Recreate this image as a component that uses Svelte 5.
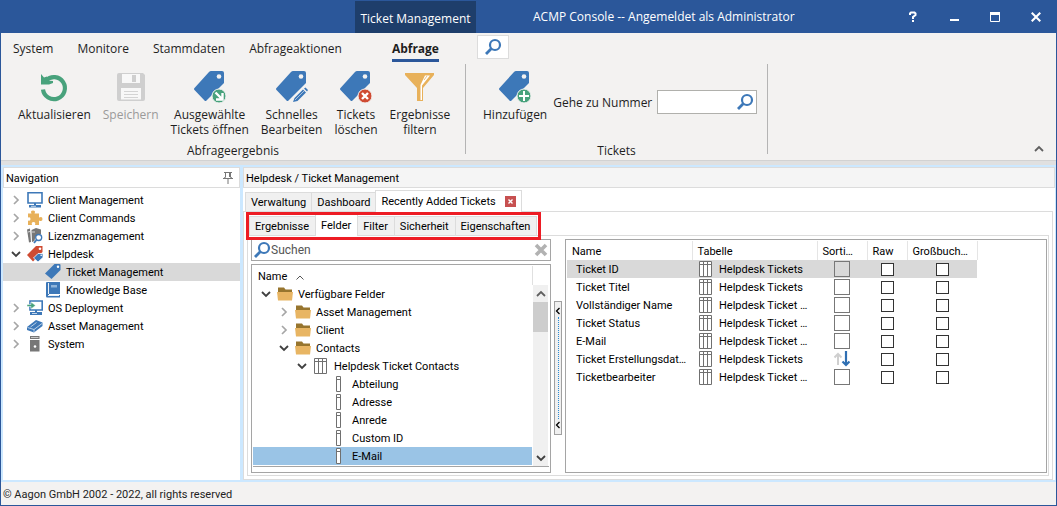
<script>
  const menus = ['System', 'Monitore', 'Stammdaten', 'Abfrageaktionen', 'Abfrage'];
  const resultActions = [
    { icon: 'refresh', lines: ['Aktualisieren'] },
    { icon: 'save', lines: ['Speichern'], disabled: true },
    { icon: 'tag-open', lines: ['Ausgewählte', 'Tickets öffnen'] },
    { icon: 'tag-edit', lines: ['Schnelles', 'Bearbeiten'] },
    { icon: 'tag-delete', lines: ['Tickets', 'löschen'] },
    { icon: 'funnel', lines: ['Ergebnisse', 'filtern'] }
  ];
  const nav = [
    { label: 'Client Management', icon: 'monitor', level: 0, state: 'closed' },
    { label: 'Client Commands', icon: 'puzzle', level: 0, state: 'closed' },
    { label: 'Lizenzmanagement', icon: 'license', level: 0, state: 'closed' },
    { label: 'Helpdesk', icon: 'helpdesk', level: 0, state: 'open' },
    { label: 'Ticket Management', icon: 'tag', level: 1, selected: true },
    { label: 'Knowledge Base', icon: 'book', level: 1 },
    { label: 'OS Deployment', icon: 'deploy', level: 0, state: 'closed' },
    { label: 'Asset Management', icon: 'asset', level: 0, state: 'closed' },
    { label: 'System', icon: 'server', level: 0, state: 'closed' }
  ];
  const fields = [
    { label: 'Verfügbare Felder', icon: 'folder', level: 0, state: 'open' },
    { label: 'Asset Management', icon: 'folder', level: 1, state: 'closed' },
    { label: 'Client', icon: 'folder', level: 1, state: 'closed' },
    { label: 'Contacts', icon: 'folder', level: 1, state: 'open' },
    { label: 'Helpdesk Ticket Contacts', icon: 'table', level: 2, state: 'open' },
    { label: 'Abteilung', icon: 'column', level: 3 },
    { label: 'Adresse', icon: 'column', level: 3 },
    { label: 'Anrede', icon: 'column', level: 3 },
    { label: 'Custom ID', icon: 'column', level: 3 },
    { label: 'E-Mail', icon: 'column', level: 3, selected: true }
  ];
  const subTabs = ['Ergebnisse', 'Felder', 'Filter', 'Sicherheit', 'Eigenschaften'];
  const rows = [
    { name: 'Ticket ID', table: 'Helpdesk Tickets', selected: true },
    { name: 'Ticket Titel', table: 'Helpdesk Tickets' },
    { name: 'Vollständiger Name', table: 'Helpdesk Ticket …' },
    { name: 'Ticket Status', table: 'Helpdesk Ticket …' },
    { name: 'E-Mail', table: 'Helpdesk Ticket …' },
    { name: 'Ticket Erstellungsdat…', table: 'Helpdesk Tickets', sorted: true },
    { name: 'Ticketbearbeiter', table: 'Helpdesk Ticket …' }
  ];
</script>

{#snippet bigTag()}
  <path fill="#3d78b8" d="M17 0H28Q30 0 30 2V12L12.500 29.500Q11.500 30.500 10.500 29.500L.5 19Q-.5 18 .5 17L15 1Q16 0 17 0Z" />
  <circle cx="25" cy="5.500" r="2.300" fill="#f3f2f1" />
{/snippet}

{#snippet icon(name)}
  {#if name === 'refresh'}
    <svg width="32" height="32" viewBox="0 0 32 32" aria-hidden="true">
      <path d="M8 9.500A11 11 0 1 1 5 18.500" fill="none" stroke="#48a27c" stroke-width="4.200" />
      <path d="M3 3L6 6.500L9 5.500L9 9.500L15 10V12L11 13.500H3Z" fill="#48a27c" />
    </svg>
  {:else if name === 'save'}
    <svg width="32" height="32" viewBox="0 0 32 32" aria-hidden="true">
      <path d="M4 2H28L30 4V28Q30 30 28 30H4Q2 30 2 28V4Q2 2 4 2Z" fill="#cfcfcf" />
      <path d="M7 3H25V12H7ZM6 17H26V28.500H6Z" fill="#f8f8f8" />
      <path d="M17 4H21V11H17Z" fill="#cfcfcf" />
      <path d="M9 20.500H23M9 23.500H23M9 26.500H23" stroke="#d4d4d4" />
    </svg>
  {:else if name === 'tag-open'}
    <svg width="32" height="32" viewBox="0 0 32 32" aria-hidden="true">
      {@render bigTag()}
      <circle cx="25" cy="25" r="7" fill="#48a27c" stroke="#f3f2f1" />
      <path d="M21.500 21.500L27.500 27.500M28.500 22V28.500H22" fill="none" stroke="#fff" stroke-width="2.400" />
    </svg>
  {:else if name === 'tag-edit'}
    <svg width="32" height="32" viewBox="0 0 32 32" aria-hidden="true">
      {@render bigTag()}
      <path d="M15 32L18 25L28 15H32V19L21 31Z" fill="#f3f2f1" />
      <path d="M17 31L18.500 27L27 18.500L30 21.500L21.500 30ZM28 17.500L29.500 16.500L32 19L31 20.500Z" fill="#3d78b8" />
      <path d="M19 29L28 20" stroke="#f3f2f1" stroke-width=".6" />
    </svg>
  {:else if name === 'tag-delete'}
    <svg width="32" height="32" viewBox="0 0 32 32" aria-hidden="true">
      {@render bigTag()}
      <circle cx="25" cy="25" r="7" fill="#cf4b32" stroke="#f3f2f1" />
      <path d="M22 22L28 28M28 22L22 28" stroke="#fff" stroke-width="2.400" />
    </svg>
  {:else if name === 'tag-add'}
    <svg width="32" height="32" viewBox="0 0 32 32" aria-hidden="true">
      {@render bigTag()}
      <circle cx="25" cy="25" r="7" fill="#48a27c" stroke="#f3f2f1" />
      <path d="M25 20V30M20 25H30" stroke="#fff" stroke-width="2" />
    </svg>
  {:else if name === 'funnel'}
    <svg width="32" height="32" viewBox="0 0 32 32" aria-hidden="true">
      <path d="M1 2H30V4L19 17V30H13V17L1 4Z" fill="#e8b15a" />
      <path d="M21 4.500H26L18 14.500V29H16.500V14Z" fill="#fff" />
      <path d="M20 9L23 5" stroke="#e8b15a" stroke-width=".8" />
    </svg>
  {:else if name === 'search'}
    <svg width="18" height="18" viewBox="0 0 18 18" aria-hidden="true">
      <circle cx="11" cy="7" r="5" fill="none" stroke="#3d78b8" stroke-width="2.200" />
      <path d="M7.200 10.800L2 16" stroke="#3d78b8" stroke-width="2.800" />
    </svg>
  {:else if name === 'monitor'}
    <svg width="16" height="16" viewBox="0 0 16 16" aria-hidden="true">
      <path d="M1 .8H15V11H1Z" fill="#fff" stroke="#3d78b8" stroke-width="1.600" />
      <path d="M7 11H9V13H14V15.500H2V13H7Z" fill="#3d78b8" />
      <path d="M4 14.300H9" stroke="#fff" stroke-width=".7" />
    </svg>
  {:else if name === 'puzzle'}
    <svg width="16" height="16" viewBox="0 0 16 16" aria-hidden="true">
      <path d="M1 3.500H4.500Q3 .5 6 .5T7.500 3.500H12V7.500Q15.500 6 15.500 9T12 10.500V15H8Q9 12 6.500 12T5 15H1V10.500Q3.500 11.500 3.500 9T1 7.500Z" fill="#e8b15a" />
    </svg>
  {:else if name === 'license'}
    <svg width="16" height="16" viewBox="0 0 16 16" aria-hidden="true">
      <path d="M0 1.500L3 .5L4 14L2 14.500ZM4.500 2L9 0L14 1.500V6Q8 6 7.500 13L5 14Z" fill="#777" />
      <path d="M1 4L3 3.500M5 4H8" stroke="#fff" stroke-width=".7" />
      <circle cx="11.700" cy="9.500" r="3" fill="#fff" stroke="#3d78b8" stroke-width="1.300" />
      <path d="M9.500 12L7 15" stroke="#3d78b8" stroke-width="1.800" />
    </svg>
  {:else if name === 'helpdesk'}
    <svg width="16" height="16" viewBox="0 0 16 16" aria-hidden="true">
      <path d="M9 0H15.500V6L6 15.500L0 9Z" fill="#cf4b32" />
      <circle cx="13" cy="2.700" r="1.300" fill="#fff" />
      <path d="M11 7.500H16V11.500L11 16L6.500 12Z" fill="#3d78b8" stroke="#fff" stroke-width=".8" />
      <circle cx="14.200" cy="9.200" r=".8" fill="#fff" />
    </svg>
  {:else if name === 'tag'}
    <svg width="16" height="16" viewBox="0 0 16 16" aria-hidden="true">
      <path d="M9.500 0H14.500Q15.500 0 15.500 1V6L6.500 15L0 9.500Z" fill="#3d78b8" />
      <circle cx="13" cy="2.800" r="1.200" fill="#fff" />
    </svg>
  {:else if name === 'book'}
    <svg width="16" height="16" viewBox="0 0 16 16" aria-hidden="true">
      <path d="M2 0H15V12H4V13H15V15.500H2Q1 15.500 1 14V1Q1 0 2 0Z" fill="#3d78b8" />
      <path d="M3.500 1V12M3 13.500H14" stroke="#fff" stroke-width=".9" />
      <path d="M6 3H12V5.500H6Z" fill="#8fb4da" />
    </svg>
  {:else if name === 'deploy'}
    <svg width="16" height="16" viewBox="0 0 16 16" aria-hidden="true">
      <path d="M3 1H15.200V10H3Z" fill="#fff" stroke="#3d78b8" stroke-width="1.600" />
      <path d="M8 10H10V12H15V15H3V12H8Z" fill="#3d78b8" />
      <path d="M5 13.500H10" stroke="#fff" stroke-width=".7" />
      <path d="M0 4.500H4V2L8.500 5.500L4 9V6.500H0Z" fill="#48a27c" stroke="#fff" stroke-width=".5" />
    </svg>
  {:else if name === 'asset'}
    <svg width="16" height="16" viewBox="0 0 16 16" aria-hidden="true">
      <path d="M0 9L9 2L15.500 4.500V8L7 14.500L0 12Z" fill="#3d78b8" />
      <path d="M.5 9.500L7 11.500L15 5.500M7 11.500V14M3.500 9L9.500 4.500" fill="none" stroke="#dce9f5" stroke-width=".8" />
    </svg>
  {:else if name === 'server'}
    <svg width="16" height="16" viewBox="0 0 16 16" aria-hidden="true">
      <path d="M3 0H12.500V3H3ZM3 4H12.500V15.500H3Z" fill="#777" />
      <path d="M4 1.500H11.500" stroke="#fff" stroke-width=".6" />
      <circle cx="8" cy="10.500" r="1.300" fill="#fff" />
    </svg>
  {:else if name === 'folder'}
    <svg width="16" height="16" viewBox="0 0 16 16" aria-hidden="true">
      <path d="M1 1.500H7L8.500 3.500H15V6H1Z" fill="#97752e" />
      <path d="M0 6H16L15 14.500H1Z" fill="#e8b563" />
    </svg>
  {:else if name === 'table'}
    <svg width="16" height="16" viewBox="0 0 16 16" aria-hidden="true">
      <path d="M1.500 .5H13.500V15.500H1.500ZM1.500 3.500H13.500M5.500 .5V15.500M9.500 .5V15.500" fill="#fff" stroke="#707070" />
    </svg>
  {:else if name === 'column'}
    <svg width="16" height="16" viewBox="0 0 16 16" aria-hidden="true">
      <path d="M5.500 .5H9.500V15.500H5.500ZM5.500 3.500H9.500" fill="#fff" stroke="#707070" />
    </svg>
  {:else if name === 'sort'}
    <svg width="16" height="16" viewBox="0 0 16 16" aria-hidden="true">
      <path d="M4 14V3M.5 6.500L4 3L7.500 6.500" fill="none" stroke="#cfcfcf" stroke-width="2" />
      <path d="M12 0V14M8.500 10.500L12 14L15.500 10.500" fill="none" stroke="#2f6fb3" stroke-width="2.200" />
    </svg>
  {:else if name === 'closed'}
    <svg width="10" height="10" viewBox="0 0 10 10" aria-hidden="true"><path d="M3 1L7 5L3 9" fill="none" stroke="#a6a6a6" stroke-width="1.700" /></svg>
  {:else if name === 'open'}
    <svg width="10" height="10" viewBox="0 0 10 10" aria-hidden="true"><path d="M1 3L5 7L9 3" fill="none" stroke="#404040" stroke-width="1.800" /></svg>
  {:else if name === 'up'}
    <svg width="10" height="10" viewBox="0 0 10 10" aria-hidden="true"><path d="M1 7L5 3L9 7" fill="none" stroke="#606060" stroke-width="1.800" /></svg>
  {:else if name === 'left'}
    <svg width="6" height="8" viewBox="0 0 6 8" aria-hidden="true"><path d="M4.500 1L1.500 4L4.500 7" fill="none" stroke="#000" stroke-width="1.300" /></svg>
  {/if}
{/snippet}

{#snippet tree(items, label)}
  <ul class="tree" aria-label={label}>
    {#each items as item}
      <li>
        <button class="node level{item.level}" class:selected={item.selected}>
          <span class="toggle">{#if item.state}{@render icon(item.state)}{/if}</span>
          {@render icon(item.icon)}
          <span>{item.label}</span>
        </button>
      </li>
    {/each}
  </ul>
{/snippet}

{#snippet action(item)}
  <button class="action" disabled={item.disabled}>
    {@render icon(item.icon)}
    <span>{#each item.lines as line, i}{#if i}<br />{/if}{line}{/each}</span>
  </button>
{/snippet}

<div class="window">
  <header class="titlebar">
    <div class="context">Ticket Management</div>
    <h1>ACMP Console -- Angemeldet als Administrator</h1>
    <div class="controls">
      <button aria-label="Hilfe"><svg width="10" height="12" viewBox="0 0 10 12"><path d="M2 4V2.500L3 1.500H6.500L7.500 2.500V4L5 6V8M4 10H6" fill="none" stroke="#fff" stroke-width="2" /></svg></button>
      <button aria-label="Minimieren"><svg width="10" height="12" viewBox="0 0 10 12"><path d="M1 9H10" stroke="#fff" stroke-width="2" /></svg></button>
      <button aria-label="Maximieren"><svg width="10" height="12" viewBox="0 0 10 12"><path d="M.5 1.500H9.500V10.500H.5Z" fill="none" stroke="#fff" /><path d="M0 1H10V4H0Z" fill="#fff" /></svg></button>
      <button aria-label="Schließen"><svg width="10" height="12" viewBox="0 0 10 12"><path d="M.7 1.700L9.300 10.300M9.300 1.700L.7 10.300" stroke="#fff" stroke-width="2.200" /></svg></button>
    </div>
  </header>

  <nav class="menus" aria-label="Menü">
    {#each menus as m}
      <button class:active={m === 'Abfrage'}>{m}</button>
    {/each}
    <button class="find" aria-label="Suche">{@render icon('search')}</button>
  </nav>

  <section class="ribbon" aria-label="Menüband">
    <div class="group results">
      <div class="actions">
        {#each resultActions as item}{@render action(item)}{/each}
      </div>
      <p>Abfrageergebnis</p>
    </div>
    <div class="group tickets">
      <div class="actions">
        {@render action({ icon: 'tag-add', lines: ['Hinzufügen'] })}
        <div class="goto">
          <label for="number">Gehe zu Nummer</label>
          <div class="number">
            <input id="number" type="text" />
            <button aria-label="Gehe zu">{@render icon('search')}</button>
          </div>
        </div>
      </div>
      <p>Tickets</p>
    </div>
    <button class="collapse" aria-label="Menüband reduzieren">{@render icon('up')}</button>
  </section>

  <main>
    <aside>
      <div class="panel-title">
        <h2>Navigation</h2>
        <button aria-label="Anheften">
          <svg width="10" height="12" viewBox="0 0 10 12"><path d="M1 .5H9M2.500 .5V5.500M7.500 .5V5.500M6.500 1V5M0 6.500H10M2.500 5L.5 6.500M7.500 5L9.500 6.500M5 7V12" fill="none" stroke="#777" /></svg>
        </button>
      </div>
      {@render tree(nav, 'Navigation')}
    </aside>

    <section class="content">
      <div class="panel-title crumbs"><h2>Helpdesk / Ticket Management</h2></div>
      <div class="tabs outer">
        <button>Verwaltung</button>
        <button>Dashboard</button>
        <div class="tab active">
          <button>Recently Added Tickets</button>
          <button class="close" aria-label="Tab schließen"><svg width="5" height="5" viewBox="0 0 5 5"><path d="M.5 .5L4.500 4.500M4.500 .5L.5 4.500" stroke="#fff" stroke-width="1.400" /></svg></button>
        </div>
      </div>
      <div class="page">
        <div class="subtabs">
          <div class="tabs inner">
            {#each subTabs as t}<button class:active={t === 'Felder'}>{t}</button>{/each}
          </div>
          <div class="marker"></div>
        </div>
        <div class="subpage">
          <div class="picker">
            <div class="search">
              {@render icon('search')}
              <input type="text" placeholder="Suchen" aria-label="Suchen" />
              <button aria-label="Leeren"><svg width="14" height="14" viewBox="0 0 14 14"><path d="M2 2L12 12M12 2L2 12" stroke="#b2b2b2" stroke-width="3.600" /></svg></button>
            </div>
            <div class="fields">
              <div class="fields-head"><button>Name <svg width="8" height="5" viewBox="0 0 8 5"><path d="M.5 4.500L4 1L7.500 4.500" fill="none" stroke="#555" /></svg></button></div>
              <div class="fields-body">
                {@render tree(fields, 'Felder')}
                <div class="scrollbar">
                  <button aria-label="Nach oben">{@render icon('up')}</button>
                  <span class="thumb"></span>
                  <button class="down" aria-label="Nach unten">{@render icon('open')}</button>
                </div>
              </div>
            </div>
          </div>
          <div class="grip">
            <button aria-label="Links einklappen">{@render icon('left')}</button>
            <span></span>
            <button aria-label="Links ausklappen">{@render icon('left')}</button>
          </div>
          <div class="grid">
            <table>
              <colgroup><col class="c-name" /><col class="c-name" /><col class="c-sort" /><col class="c-raw" /><col class="c-upper" /></colgroup>
              <thead>
                <tr><th>Name</th><th>Tabelle</th><th>Sorti…</th><th>Raw</th><th>Großbuch…</th></tr>
              </thead>
              <tbody>
                {#each rows as r}
                  <tr class:selected={r.selected}>
                    <td class="name">{r.name}</td>
                    <td><span class="cell">{@render icon('table')}<span>{r.table}</span></span></td>
                    <td class="check">
                      {#if r.sorted}<button class="sorted" aria-label="Absteigend sortiert">{@render icon('sort')}</button>
                      {:else}<input class="sort" type="checkbox" aria-label="Sortierung {r.name}" />{/if}
                    </td>
                    <td class="check"><input type="checkbox" aria-label="Raw {r.name}" /></td>
                    <td class="check"><input type="checkbox" aria-label="Großbuchstaben {r.name}" /></td>
                  </tr>
                {/each}
              </tbody>
            </table>
          </div>
        </div>
      </div>
    </section>
  </main>

  <footer>© Aagon GmbH 2002 - 2022, all rights reserved</footer>
</div>

<style>
  :global(body) { margin: 0; }
  .window, .window :global(*) { box-sizing: border-box; }
  .window {
    min-height: 100vh;
    display: flex;
    flex-direction: column;
    border: 1px solid #2b579a;
    border-top: 0;
    background: #f3f2f1;
    color: #1e1e1e;
    font: 12px/15px "Open Sans", "Noto Sans", sans-serif;
  }
  button {
    margin: 0;
    padding: 0;
    border: 0;
    background: none;
    color: inherit;
    font: inherit;
    white-space: nowrap;
  }
  svg { display: block; flex: none; }
  h1, h2, p { margin: 0; font: inherit; }

  .titlebar {
    height: 33px;
    display: flex;
    align-items: stretch;
    background: #2b579a;
    color: #fff;
    padding-left: 354px;
  }
  .context {
    width: 121px;
    margin-top: 1px;
    background: #1e3e6b;
    display: flex;
    align-items: center;
    justify-content: center;
    padding-top: 2px;
    white-space: nowrap;
  }
  h1 { padding: 9px 0 0 57px; white-space: nowrap; }
  .controls { margin-left: auto; display: flex; }
  .controls button { width: 41px; display: grid; place-items: center; }

  .menus {
    display: flex;
    align-items: flex-start;
    height: 31px;
    padding: 2px 12px 0;
  }
  .menus button { height: 27px; margin-right: 24px; }
  .menus .active { font-weight: 700; border-bottom: 3px solid #2b579a; padding-top: 3px; margin-left: 26px; }
  .menus .find {
    width: 32px;
    height: 24px;
    margin-left: 14px;
    display: grid;
    place-items: center;
    background: #fff;
    border: 1px solid #dcdcdc;
  }

  .ribbon { display: flex; height: 97px; border-bottom: 1px solid #d2d2d2; }
  .group {
    height: 90px;
    display: flex;
    flex-direction: column;
    border-right: 1px solid #b4b4b4;
    text-align: center;
  }
  .results { width: 465px; }
  .tickets { width: 302px; }
  .actions { flex: 1; display: flex; gap: 12px; padding: 7px 0 0 17px; }
  .tickets .actions { gap: 6px; }
  .action { display: flex; flex-direction: column; align-items: center; gap: 4px; height: 68px; }
  .action:disabled { color: #9a9a9a; }
  .group p { height: 12px; line-height: 16px; margin-bottom: -1px; }
  .goto { display: flex; align-items: center; gap: 5px; height: 62px; white-space: nowrap; }
  .number { display: flex; align-items: center; width: 100px; height: 24px; border: 1px solid #b0b0ac; background: #fff; padding-right: 2px; }
  .number input { flex: 1; min-width: 0; border: 0; padding: 0 4px; outline: 0; font: inherit; }
  .collapse { margin: auto 12px 6px auto; }

  main {
    flex: 1;
    display: flex;
    gap: 3px;
    border: 2px solid #cce8ff;
    border-width: 2px 1px 2px 2px;
    margin-top: 4px;
    background: #cce8ff;
    color: #000;
    font: 11px/16px Roboto, "Noto Sans", sans-serif;
    box-shadow: 0 -4px #e0e0e0;
  }
  aside { width: 237px; background: #fff; }
  .panel-title {
    height: 21px;
    display: flex;
    align-items: center;
    justify-content: space-between;
    padding: 0 6px 0 2px;
    border: 1px solid #dcdcdc;
    background: #fff;
  }
  h2 { padding-top: 2px; }
  .crumbs { background: #f5f5f5; }
  .tree { list-style: none; margin: 0; padding: 0; }
  aside .tree { padding-top: 3px; }
  .node { display: flex; align-items: center; width: 100%; height: 18px; text-align: left; }
  .node > span:last-child { margin-left: 5px; padding-top: 2px; }
  .toggle { width: 16px; }
  .level0 { padding-left: 8px; }
  .level1 { padding-left: 26px; }
  .level2 { padding-left: 44px; }
  .level3 { padding-left: 62px; }
  aside .selected { background: #d9d9d9; }

  .content { flex: 1; min-width: 0; display: flex; flex-direction: column; background: #fff; }
  .tabs { display: flex; align-items: flex-end; }
  .tabs > button, .tab {
    height: 19px;
    padding: 2px 5px 0;
    background: #f0f0f0;
    border: 1px solid #dcdcdc;
    border-bottom: 0;
    margin-right: -1px;
  }
  .outer { height: 23px; padding-left: 2px; }
  .tab { display: flex; align-items: center; gap: 9px; }
  .tab.active { padding: 0 5px; }
  .tabs > .active { height: 22px; background: #fff; position: relative; margin-bottom: -1px; }
  .close { width: 11px; height: 11px; background: #c75050; display: grid; place-items: center; }
  .page { flex: 1; display: flex; flex-direction: column; border: 1px solid #dcdcdc; padding: 0 3px 3px; margin-right: 2px; }
  .subtabs { position: relative; display: flex; height: 23px; align-items: flex-end; padding-left: 2px; }
  .marker { position: absolute; left: -1px; top: 0; width: 295px; height: 28px; border: 3px solid #ed1c24; pointer-events: none; z-index: 1; }
  .subpage { flex: 1; display: flex; gap: 3px; border: 1px solid #dcdcdc; padding: 3px 1px 2px 3px; }
  .inner > button { padding: 2px 6px 0 5px; }
  .inner > .active { padding-top: 0; }
  .picker { width: 300px; display: flex; flex-direction: column; gap: 3px; }
  .search { height: 22px; display: flex; align-items: center; border: 1px solid #a5a5a5; padding: 0 2px 0 1px; }
  .search input { flex: 1; min-width: 0; border: 0; outline: 0; padding: 0; font: inherit; font-size: 12px; }
  .search input::placeholder { color: #555; opacity: 1; }
  .fields { flex: 1; border: 1px solid #a5a5a5; padding: 1px; }
  .fields-head { height: 19px; width: 280px; border-right: 1px solid #e0e0e0; padding: 3px 0 0 5px; }
  .fields-head button { display: flex; align-items: center; gap: 9px; }
  .fields-body { display: flex; justify-content: space-between; height: 182px; border-bottom: 1px solid #a5a5a5; padding-right: 1px; }
  .fields-body .tree { width: 279px; }
  .fields-body .selected { background: #9ac4e6; }
  .scrollbar { width: 15px; display: flex; flex-direction: column; background: #f0f0f0; }
  .scrollbar button { height: 17px; display: grid; place-items: center; }
  .thumb { height: 30px; background: #cdcdcd; }
  .scrollbar .down { margin-top: auto; }
  .grip {
    width: 8px;
    height: 134px;
    margin-top: 62px;
    display: flex;
    flex-direction: column;
    align-items: center;
    border: 1px solid #a0a0a0;
    background: #f0f0f0;
    padding: 5px 0;
  }
  .grip span { flex: 1; border-left: 1px dotted #2a8ad4; margin: 2px 0; }
  .grid { flex: 1; min-width: 0; border: 1px solid #a5a5a5; padding: 1px; }
  table { border-collapse: collapse; table-layout: fixed; width: 410px; }
  .c-name { width: 125px; }
  .c-sort { width: 50px; }
  .c-raw { width: 40px; }
  .c-upper { width: 70px; }
  th { height: 19px; padding: 2px 0 0 5px; border-right: 1px solid #e5e5e5; font-weight: 400; text-align: left; white-space: nowrap; }
  td { height: 18px; padding: 0; white-space: nowrap; }
  td.name { padding: 2px 0 0 9px; }
  tr.selected { background: #d9d9d9; }
  .cell { display: flex; align-items: center; gap: 5px; height: 18px; padding-left: 6px; }
  .cell span { padding-top: 2px; }
  td input { display: block; appearance: none; width: 13px; height: 13px; margin: 0 auto; border: 1px solid #333; background: #fff; }
  td .sort { width: 16px; height: 16px; border-color: #777; background: none; }
  .sorted { display: block; margin: 0 auto; }

  footer { height: 23px; padding: 4px 2px 0; color: #222; font: 11px/18px Roboto, "Noto Sans", sans-serif; }
</style>
